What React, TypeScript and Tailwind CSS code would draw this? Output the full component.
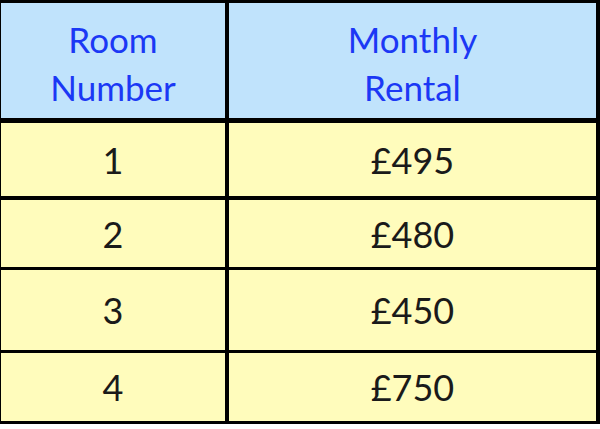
const rows = [
  { room: "1", rent: "£495", h: "h-[77px] border-b-4" },
  { room: "2", rent: "£480", h: "h-[70px] border-b-[3px]" },
  { room: "3", rent: "£450", h: "h-[83px] border-b-[3px]" },
  { room: "4", rent: "£750", h: "h-[68px]" },
];

const font = { fontFamily: "Lato, 'Open Sans', sans-serif" };

export default function App() {
  return (
    <div className="h-[429px] w-[600px] bg-white" style={font}>
      <div className="grid grid-cols-[228px_367px] border-t-[3px] border-r-4 border-b-[3px] border-l border-black">
        <div className="flex h-[120px] flex-col items-center justify-center border-r-4 border-b-[5px] border-black bg-[#c0e3fc] pt-1 text-[35px] leading-[48px] text-[#1b38f5]">
          <span>Room</span>
          <span>Number</span>
        </div>
        <div className="flex h-[120px] flex-col items-center justify-center border-b-[5px] border-black bg-[#c0e3fc] pt-1 text-[35px] leading-[48px] text-[#1b38f5]">
          <span>Monthly</span>
          <span>Rental</span>
        </div>
        {rows.map((r) => (
          <div key={r.room} className="contents">
            <div
              className={`flex items-center justify-center border-r-4 border-black bg-[#fffcbc] text-[36px] text-[#1a1a1a] ${r.h}`}
            >
              {r.room}
            </div>
            <div
              className={`flex items-center justify-center border-black bg-[#fffcbc] text-[36px] text-[#1a1a1a] ${r.h}`}
            >
              {r.rent}
            </div>
          </div>
        ))}
      </div>
    </div>
  );
}
